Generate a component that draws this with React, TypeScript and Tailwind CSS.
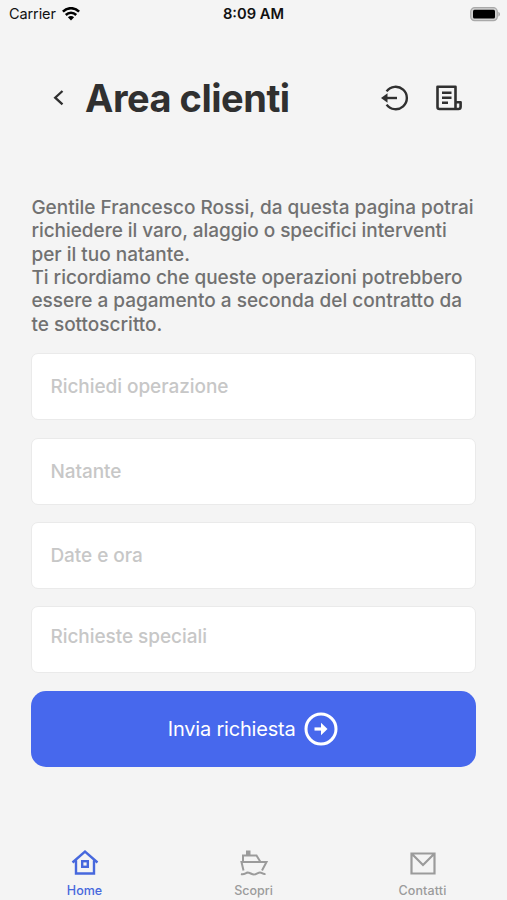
import React from "react";

function Field({ label, raised = false }: { label: string; raised?: boolean }) {
  return (
    <div
      className={`flex h-[67px] items-center rounded-[7px] border border-[#eaeaea] bg-white px-[18px] text-[19px] leading-6 font-medium tracking-[-0.05px] text-[#c7c7c7] ${
        raised ? "pb-[5px]" : "pt-px"
      }`}
    >
      {label}
    </div>
  );
}

function Wifi() {
  return (
    <svg width="18" height="14" viewBox="0 0 18 14" fill="none" stroke="#000" strokeWidth="2.5">
      <path d="M0.9 4.6C5.4 0 12.6 0 17.1 4.6" />
      <path d="M3.8 8C6.7 5.1 11.3 5.1 14.2 8" />
      <path d="M9 13.5L5.9 10.3C7.7 8.7 10.3 8.7 12.1 10.3Z" fill="#000" stroke="none" />
    </svg>
  );
}

function Battery() {
  return (
    <svg width="31" height="15" viewBox="0 0 31 15">
      <rect x="0.7" y="0.7" width="26.6" height="13" rx="4" fill="#d0d0d0" stroke="#a9a9a9" strokeWidth="1.2" />
      <rect x="3" y="2.8" width="22" height="8.8" rx="1.5" fill="#000" />
      <path d="M28.3 4.8C30.6 5.6 30.6 8.8 28.3 9.6Z" fill="#a9a9a9" />
    </svg>
  );
}

export default function App() {
  return (
    <div className="flex h-[900px] w-[507px] flex-col overflow-hidden bg-[#f4f4f4] font-['Inter',sans-serif]">
      <header className="grid h-7 grid-cols-3 items-center pr-[6px] pl-[9px] text-[#111]">
        <div className="flex items-center gap-[6px] text-[14.5px]">
          <span className="tracking-[-0.1px]">Carrier</span>
          <Wifi />
        </div>
        <div className="pr-[3px] text-center text-[14.7px] font-semibold">8:09 AM</div>
        <div className="flex justify-end">
          <Battery />
        </div>
      </header>

      <div className="mt-[40px] flex h-[60px] items-center pl-[52px]">
        <svg width="12" height="18" viewBox="0 0 12 18" fill="none" stroke="#2f2f2f" strokeWidth="2.3">
          <path d="M10.5 2L3.2 8.7L10.5 15.4" />
        </svg>
        <h1 className="ml-[21px] w-[295px] text-[38px] font-bold tracking-[-0.48px] text-[#303030]">Area clienti</h1>
        <svg width="30" height="28" viewBox="0 0 30 28" fill="none" stroke="#303030" strokeWidth="2.4">
          <path d="M6.6 7.4A11.2 11.2 0 1 1 6.6 20.6" />
          <path d="M6 14H17" />
          <path d="M1 14L7.5 9.2V18.8Z" fill="#303030" stroke="none" />
        </svg>
        <svg className="ml-[25px]" width="28" height="28" viewBox="0 0 28 28" fill="none" stroke="#303030" strokeWidth="2.6" strokeLinejoin="round">
          <path d="M20.5 25H4.5Q2.5 25 2.5 23V2.8H20.5V25H23.4Q25.6 25 25.6 22.8V18.2H20.5" />
          <path d="M7 8.8H16.5M7 13.8H16.5M7 18.8H13" />
        </svg>
      </div>

      <main className="mr-[30.6px] ml-[31.4px] mt-[68px] w-[445px]">
        <p className="text-[19px] leading-[23.35px] font-medium whitespace-nowrap text-[#717171]">
          Gentile Francesco Rossi, da questa pagina potrai
          <br />
          <span className="tracking-[-0.04px]">richiedere il varo, alaggio o specifici interventi</span>
          <br />
          per il tuo natante.
          <br />
          <span className="tracking-[-0.02px]">Ti ricordiamo che queste operazioni potrebbero</span>
          <br />
          essere a pagamento a seconda del contratto da
          <br />
          te sottoscritto.
        </p>

        <div className="mt-[17.4px] flex flex-col gap-[17.3px]">
          <Field label="Richiedi operazione" />
          <Field label="Natante" />
          <Field label="Date e ora" />
          <Field label="Richieste speciali" raised />
          <button className="flex h-[76px] items-center justify-center gap-[8px] rounded-[15px] bg-[#4768ed] pr-[2.5px] text-[20px] text-white">
            <span className="whitespace-nowrap tracking-[-0.2px]">Invia richiesta</span>
            <svg width="34" height="34" viewBox="0 0 34 34" fill="none" stroke="#fff">
              <circle cx="17" cy="17" r="15" strokeWidth="3" />
              <path d="M10.5 17H18" strokeWidth="3.2" />
              <path d="M17 10.8L23.5 17L17 23.2Z" fill="#fff" stroke="none" />
            </svg>
          </button>
        </div>
      </main>

      <nav className="mt-auto grid h-[53px] grid-cols-3 text-[12.5px] leading-4 font-medium text-[#9b9b9b]">
        <div className="flex flex-col items-center gap-[6px] text-[#4768dd]">
          <svg width="28" height="30" viewBox="0 0 28 30" fill="none" stroke="currentColor" strokeWidth="2.4">
            <path d="M1.5 15.5L14 4.5L26.5 15.5M5 13.5V26.5H23V13.5" />
            <rect x="11.2" y="14.2" width="5.6" height="5.6" />
          </svg>
          <span>Home</span>
        </div>
        <div className="flex flex-col items-center gap-[6px]">
          <svg width="30" height="30" viewBox="0 0 30 30" fill="none" stroke="currentColor" strokeWidth="2">
            <path d="M4.5 23.5L2.5 15H27.5L23 23.5M4 15V8.5H17.5L21.5 15" />
            <path d="M7 3.5H11.5V8H7Z" fill="currentColor" stroke="none" />
            <path d="M2 27C5 28 6.5 26 8.5 25.5C11 25.5 12.5 27.5 15 27.5C17.5 27.5 19 25.5 21 25.5C23 25.5 23.5 27.5 26.5 27" />
          </svg>
          <span>Scopri</span>
        </div>
        <div className="flex flex-col items-center gap-[6px]">
          <svg width="28" height="30" viewBox="0 0 28 30" fill="none" stroke="currentColor" strokeWidth="2.2">
            <path d="M2.5 6.5H25.5V26.5H2.5ZM3 7L14 18L25 7" />
          </svg>
          <span className="tracking-[0.15px]">Contatti</span>
        </div>
      </nav>
    </div>
  );
}
